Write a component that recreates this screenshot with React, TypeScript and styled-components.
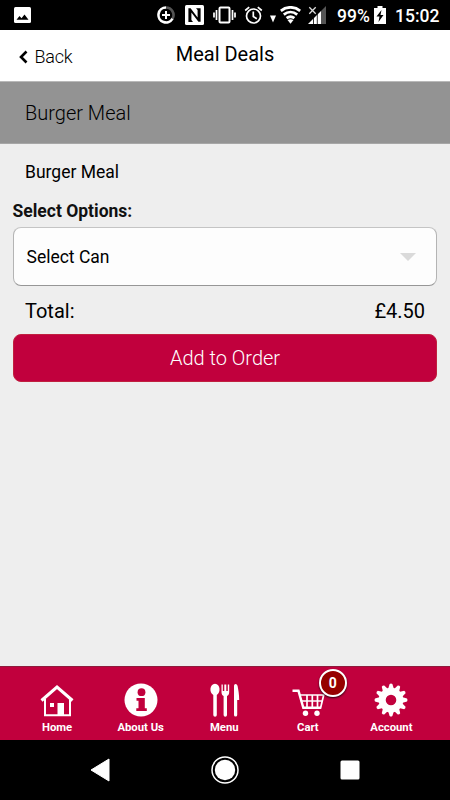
import React from "react";
import styled, { createGlobalStyle } from "styled-components";

const GlobalStyle = createGlobalStyle`
  * {
    box-sizing: border-box;
  }
  body {
    margin: 0;
    font-family: Roboto, "Liberation Sans", sans-serif;
  }
`;

const Screen = styled.div`
  display: flex;
  flex-direction: column;
  width: 450px;
  height: 800px;
  background: #eeeeee;
  color: #000;
  overflow: hidden;
`;

const StatusBar = styled.div`
  display: flex;
  align-items: center;
  height: 30px;
  padding: 0 10px 0 14px;
  background: #000;
  color: #fff;
`;

const StatusIcon = styled.svg<{ $gap?: number }>`
  display: block;
  flex: none;
  margin-left: ${(p) => p.$gap || 0}px;
`;

const StatusText = styled.span<{ $gap: number; $width: number }>`
  flex: none;
  width: ${(p) => p.$width}px;
  margin-left: ${(p) => p.$gap}px;
  font-size: 17.5px;
  font-weight: 500;
  line-height: 30px;
  padding-top: 1px;
  white-space: nowrap;
`;

const Header = styled.header`
  display: grid;
  grid-template-columns: 1fr auto 1fr;
  height: 52px;
  padding: 0 18px;
  background: #fff;
  border-bottom: 1px solid #b9b9b9;
`;

const BackButton = styled.button`
  display: flex;
  align-items: center;
  gap: 6.5px;
  height: 51px;
  padding: 2px 0 0;
  border: 0;
  background: none;
  font-family: inherit;
  font-size: 18px;
  font-weight: 300;
  letter-spacing: -0.2px;
  color: #000;
`;

const Title = styled.h1`
  margin: 0;
  font-size: 20px;
  font-weight: 400;
  line-height: 49px;
`;

const Banner = styled.div`
  height: 62px;
  padding-left: 25px;
  background: #939393;
  border-bottom: 1px solid #a6a6a6;
  font-size: 20px;
  font-weight: 300;
  line-height: 62px;
`;

const Content = styled.main`
  display: flex;
  flex: 1;
  flex-direction: column;
  padding: 17px 13px 0;
`;

const ItemName = styled.div`
  padding-left: 12px;
  font-size: 17.5px;
  line-height: 23px;
`;

const OptionsLabel = styled.div`
  margin-top: 16px;
  font-size: 17.5px;
  font-weight: 700;
  line-height: 22px;
  text-indent: -0.5px;
  color: #111;
`;

const SelectBox = styled.div`
  display: flex;
  align-items: center;
  justify-content: space-between;
  height: 59px;
  margin-top: 5px;
  padding: 0 20px 0 12.5px;
  border: 1px solid #b4b4b4;
  border-top-color: #c4c4c4;
  border-bottom-color: #969696;
  border-radius: 8px;
  background: #fdfdfd;
  font-size: 17.5px;
`;

const TotalRow = styled.div`
  display: flex;
  justify-content: space-between;
  height: 48px;
  padding: 1px 12px 0;
  font-size: 20px;
  line-height: 48px;
`;

const OrderButton = styled.button`
  height: 48px;
  padding: 0;
  border: 1px solid #c0203f;
  border-radius: 8px;
  background: #c1003d;
  color: #fff;
  font-family: inherit;
  font-size: 20px;
  font-weight: 300;
`;

const TabBar = styled.nav`
  display: flex;
  height: 74px;
  padding: 0 17px 0 15px;
  border-top: 1px solid #8d1c3c;
  background: #c1003d;
  color: #fff;
`;

const Tab = styled.div`
  position: relative;
  display: flex;
  flex: 1 1 0;
  flex-direction: column;
  align-items: center;
  padding: 16px 0 0 0.5px;
`;

const TabIcon = styled.svg`
  display: block;
  flex: none;
  width: 34px;
  height: 34px;
`;

const TabLabel = styled.span`
  margin-top: 4px;
  font-size: 11.3px;
  font-weight: 700;
  line-height: 14px;
`;

const Badge = styled.span`
  position: absolute;
  top: 2px;
  left: 53px;
  width: 28px;
  height: 28px;
  border: 2.500px solid #fff;
  border-radius: 50%;
  background: #960000;
  box-shadow: 0 1px 2px rgba(0, 0, 0, 0.8);
  font-size: 14px;
  font-weight: 700;
  line-height: 24px;
  text-align: center;
`;

const SystemNav = styled.div`
  display: flex;
  align-items: center;
  justify-content: space-between;
  height: 60px;
  padding: 0 90px;
  background: #000;
`;

const PhoneStatus = () => (
  <StatusBar>
    <StatusIcon width="17" height="16" viewBox="0 0 17 16">
      <rect width="17" height="16" rx="1.5" fill="#fff" />
      <path d="M2.5 12.8 5.5 9l2 2.2L10.5 7.5l4 5.3z" fill="#000" />
    </StatusIcon>
    <StatusIcon $gap={126} width="18" height="18" viewBox="0 0 18 18" fill="none" stroke="#fff">
      <path d="M9 1.5A7.5 7.5 0 0 1 15.5 12.7" stroke="#555" strokeWidth="2.6" />
      <path d="M9 1.5A7.5 7.5 0 1 0 15.5 12.7" strokeWidth="2.6" />
      <path d="M9 5v8M5 9h8" strokeWidth="2" />
    </StatusIcon>
    <StatusIcon $gap={10} width="19" height="20" viewBox="0 0 19 20">
      <rect width="19" height="20" rx="1.5" fill="#fff" />
      <path d="M5.600 17H3.400V3.200h2.200l7 9.300V5L11 3.200h4.600v13.600h-2.200L6.400 7.500V15L8 17z" fill="#000" />
    </StatusIcon>
    <StatusIcon $gap={9} width="23" height="18" viewBox="0 0 23 18" fill="none" stroke="#fff" strokeWidth="2">
      <rect x="6.5" y="1.5" width="10" height="15" rx="1" />
      <path d="M3.5 4v10M19.5 4v10M1 6.5v5M22 6.5v5" strokeWidth="1.7" />
    </StatusIcon>
    <StatusIcon $gap={8} width="19" height="18" viewBox="0 0 19 18" fill="none" stroke="#fff" strokeWidth="1.7">
      <circle cx="9.5" cy="10" r="7" />
      <path d="M1.2 4.5 5.2 1.2M17.8 4.5l-4-3.3M9.3 5.5v5l3.5 2.2" />
    </StatusIcon>
    <StatusIcon $gap={7} width="6" height="18" viewBox="0 0 6 18">
      <path d="M0 9.5h6l-3 7z" fill="#fff" />
    </StatusIcon>
    <StatusIcon $gap={4} width="21" height="18" viewBox="0 0 21 18" fill="none" stroke="#fff" strokeWidth="2.8">
      <path d="M.8 4.8C6.5.2 14.5.2 20.2 4.8M3.8 8.6c4-3.2 9.4-3.2 13.4 0M6.6 12.2c2.4-1.8 5.4-1.8 7.8 0" />
      <path d="M7.5 14c1.7-1.1 4.3-1.1 6 0l-3 3.8z" fill="#fff" stroke="none" />
    </StatusIcon>
    <StatusIcon $gap={7} width="18" height="18" viewBox="0 0 18 18">
      <path d="M18 0v18h-5V5z" fill="#555" />
      <path d="M0 18 13 5v13z" fill="#fff" />
      <path d="M5.5 11.5V18M9.3 8v10" stroke="#000" strokeWidth=".8" />
      <path d="m1.3 1.3 6.400 6.400M7.700 1.300 1.300 7.700" stroke="#000" strokeWidth="3" />
      <path d="m1.300 1.300 6.400 6.400M7.700 1.300 1.300 7.700" stroke="#ddd" strokeWidth="1.300" />
    </StatusIcon>
    <StatusText $gap={11} $width={33}>99%</StatusText>
    <StatusIcon $gap={4} width="12" height="18" viewBox="0 0 12 18">
      <path d="M3.5 0h5v2H12v16H0V2h3.5z" fill="#fff" />
      <path d="M7.5 4 2.5 10.5h3L4.5 16l5-7h-3z" fill="#000" />
    </StatusIcon>
    <StatusText $gap={9} $width={46}>15:02</StatusText>
  </StatusBar>
);

const HomeIcon = () => (
  <TabIcon viewBox="0 0 34 34" fill="none" stroke="#fff">
    <path d="M1.5 17.5 17 4l15.5 13.5" strokeWidth="3" />
    <path d="M5 16v16.3h25V16" strokeWidth="2" />
    <path d="M17.5 20H24v12h-6.5zM10 20h4v4h-4z" fill="#fff" stroke="none" />
  </TabIcon>
);

const InfoIcon = () => (
  <TabIcon viewBox="0 0 34 34">
    <circle cx="17" cy="17" r="16.5" fill="#fff" />
    <circle cx="17.5" cy="9.2" r="3.9" fill="#c1003d" />
    <path d="M12.5 15h8.3v10.3h2V28H12.3v-2.7h2.2v-7.6h-2z" fill="#c1003d" />
  </TabIcon>
);

const CutleryIcon = () => (
  <TabIcon viewBox="0 0 34 34" fill="#fff">
    <path d="M8 .8c5.400 0 6 9 1.800 11.200V32a1.700 1.700 0 0 1-3.500 0V12C2 9.800 2.600.8 8 .8z" />
    <path d="M14.500 1.500h1.300V8h1.500V1.500h2V8h1.500V1.500h1.400V9c0 2.500-1 3.500-2.200 4v19a1.600 1.600 0 0 1-3.400 0V13c-1.200-.5-2.100-1.500-2.100-4z" />
    <path d="M27 32V3c0-2.700 3-2.700 3.600 0 .7 3.500 1.600 8.500 1.600 14h-2v15a1.600 1.600 0 0 1-3.200 0z" />
  </TabIcon>
);

const CartIcon = () => (
  <TabIcon viewBox="0 0 34 34" fill="none" stroke="#fff">
    <path d="M1.500 7.800h6l4.800 17h18" strokeWidth="2.400" />
    <path d="M8.500 12h24.200l-3 12.500M9.800 18h21M16 12v12M21.300 12v12M26.500 12v12" strokeWidth="1.700" />
    <circle cx="14.5" cy="30.3" r="2.7" fill="#fff" stroke="none" />
    <circle cx="26" cy="30.3" r="2.7" fill="#fff" stroke="none" />
  </TabIcon>
);

const teeth = Array.from({ length: 12 }, (_, i) => i * 30);

const GearIcon = () => (
  <TabIcon viewBox="0 0 34 34" fill="#fff">
    <circle cx="17" cy="17" r="8.800" fill="none" stroke="#fff" strokeWidth="7" />
    {teeth.map((angle) => (
      <path key={angle} d="M13.800 7 15.600 1q1.400-1 2.800 0L20.200 7z" transform={`rotate(${angle} 17 17)`} />
    ))}
  </TabIcon>
);

const tabs = [
  { label: "Home", Icon: HomeIcon },
  { label: "About Us", Icon: InfoIcon },
  { label: "Menu", Icon: CutleryIcon },
  { label: "Cart", Icon: CartIcon, count: 0 },
  { label: "Account", Icon: GearIcon },
];

const App = () => {
  return (
    <>
      <GlobalStyle />
      <Screen>
        <PhoneStatus />
        <Header>
          <BackButton>
            <svg width="10" height="14" viewBox="0 0 10 14">
              <path d="M8.5 1.5 3 7l5.5 5.5" fill="none" stroke="#000" strokeWidth="2.6" />
            </svg>
            Back
          </BackButton>
          <Title>Meal Deals</Title>
        </Header>
        <Banner>Burger Meal</Banner>
        <Content>
          <ItemName>Burger Meal</ItemName>
          <OptionsLabel>Select Options:</OptionsLabel>
          <SelectBox>
            Select Can
            <svg width="16" height="8" viewBox="0 0 16 8">
              <path d="M0 0h16L8 8z" fill="#dadada" />
            </svg>
          </SelectBox>
          <TotalRow>
            <span>Total:</span>
            <span>£4.50</span>
          </TotalRow>
          <OrderButton>Add to Order</OrderButton>
        </Content>
        <TabBar>
          {tabs.map(({ label, Icon, count }) => (
            <Tab key={label}>
              <Icon />
              <TabLabel>{label}</TabLabel>
              {count !== undefined && <Badge>{count}</Badge>}
            </Tab>
          ))}
        </TabBar>
        <SystemNav>
          <svg width="20" height="24" viewBox="0 0 20 24">
            <path d="M19 1v22L1 12z" fill="#fff" stroke="#fff" strokeLinejoin="round" />
          </svg>
          <svg width="28" height="28" viewBox="0 0 28 28">
            <circle cx="14" cy="14" r="13" fill="none" stroke="#fff" strokeWidth="1.5" />
            <circle cx="14" cy="14" r="10.2" fill="#fff" />
          </svg>
          <svg width="20" height="20" viewBox="0 0 20 20">
            <rect x=".5" y=".5" width="19" height="19" rx="1.5" fill="#fff" />
          </svg>
        </SystemNav>
      </Screen>
    </>
  );
};

export default App;
